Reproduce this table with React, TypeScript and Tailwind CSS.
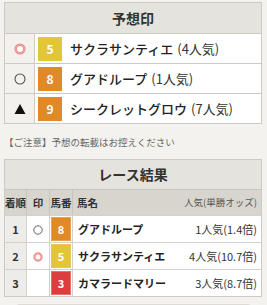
const font = { fontFamily: '"Noto Sans CJK JP", "Liberation Sans", sans-serif' };

type Mark = "double" | "circle" | "triangle" | null;

function MarkIcon({ mark, size = 12 }: { mark: Mark; size?: number }) {
  if (mark === "double") {
    return (
      <svg width={size} height={size} viewBox="0 0 12 12">
        <circle cx="6" cy="6" r="4.3" fill="#fff" stroke="#ec8c8c" strokeWidth="2.6" />
        <circle cx="6" cy="6" r="4.3" fill="none" stroke="#f2b3b3" strokeWidth="0.6" />
      </svg>
    );
  }
  if (mark === "circle") {
    return (
      <svg width={size} height={size} viewBox="0 0 12 12">
        <circle cx="6" cy="6" r="5" fill="none" stroke="#555" strokeWidth="1.1" />
      </svg>
    );
  }
  if (mark === "triangle") {
    return (
      <svg width={size} height={size} viewBox="0 0 12 12">
        <polygon points="6,1 11.5,11 0.5,11" fill="#111" />
      </svg>
    );
  }
  return null;
}

const picks = [
  { mark: "double" as Mark, num: 5, color: "bg-[#e3c637]", name: "サクラサンティエ", pop: "(4人気)" },
  { mark: "circle" as Mark, num: 8, color: "bg-[#e08a27]", name: "グアドループ", pop: "(1人気)" },
  { mark: "triangle" as Mark, num: 9, color: "bg-[#e08a27]", name: "シークレットグロウ", pop: "(7人気)" },
];

const results = [
  { rank: 1, mark: "circle" as Mark, num: 8, color: "bg-[#e08a27]", name: "グアドループ", odds: "1人気(1.4倍)" },
  { rank: 2, mark: "double" as Mark, num: 5, color: "bg-[#e3c637]", name: "サクラサンティエ", odds: "4人気(10.7倍)" },
  { rank: 3, mark: null, num: 3, color: "bg-[#de3d3d]", name: "カマラードマリー", odds: "3人気(8.7倍)" },
];

export default function App() {
  return (
    <div className="w-[267px] h-[305px] overflow-hidden bg-[#f4f2ef] pt-[2px] text-[#333]" style={font}>
      {/* 予想印 */}
      <div className="mx-[4px] w-[258px] border border-[#cdcac4] bg-white">
        <div className="h-[30px] bg-[#e5e3de] flex items-center justify-center text-[14px] font-bold text-[#333]">
          予想印
        </div>
        {picks.map((p) => (
          <div key={p.num} className="flex h-[30px] border-t border-[#cdcac4]">
            <div className="w-[30px] shrink-0 bg-[#f3f1ee] border-r border-[#cdcac4] flex items-center justify-center">
              <MarkIcon mark={p.mark} />
            </div>
            <div className="flex items-center pl-[3px]">
              <div className={`${p.color} w-[24px] h-[24px] flex items-center justify-center text-white text-[12px] font-bold`}>
                {p.num}
              </div>
              <span className="ml-[8px] text-[13px] font-medium text-[#222]">{p.name}</span>
              <span className="ml-[4px] text-[13px] text-[#333]">{p.pop}</span>
            </div>
          </div>
        ))}
      </div>

      <p className="mx-[4px] mt-[11px] text-[9.5px] leading-[14px] text-[#666]">【ご注意】予想の転載はお控えください</p>

      {/* レース結果 */}
      <div className="mx-[4px] mt-[10px] w-[258px] border border-[#cdcac4] bg-white">
        <div className="h-[29px] bg-[#e5e3de] flex items-center justify-center text-[14px] font-bold text-[#333]">
          レース結果
        </div>
        <div className="flex h-[26px] border-t border-[#c7c4bd] bg-[#d8d5cf] text-[10.5px] font-bold text-[#333]">
          <div className="w-[22px] flex items-center justify-center border-r border-[#c7c4bd]">着順</div>
          <div className="w-[23px] flex items-center justify-center border-r border-[#c7c4bd]">印</div>
          <div className="w-[23px] flex items-center justify-center border-r border-[#c7c4bd]">馬番</div>
          <div className="flex-1 flex items-center pl-[4px]">馬名</div>
          <div className="flex items-center pr-[4px] text-[9.5px] font-normal text-[#555]">人気(単勝オッズ)</div>
        </div>
        {results.map((r) => (
          <div key={r.rank} className="flex h-[27px] border-t border-[#d4d1cb] text-[11px]">
            <div className="w-[22px] flex items-center justify-center bg-[#eeece8] border-r border-[#d4d1cb] font-bold">
              {r.rank}
            </div>
            <div className="w-[23px] flex items-center justify-center border-r border-[#d4d1cb] pt-[2px]">
              <MarkIcon mark={r.mark} size={10} />
            </div>
            <div className="w-[23px] flex items-center justify-center border-r border-[#d4d1cb]">
              <div className={`${r.color} w-[20px] h-[24px] flex items-center justify-center text-white text-[11px] font-bold border border-[#f0c0a0]/40`}>
                {r.num}
              </div>
            </div>
            <div className="flex-1 flex items-center pl-[5px] font-bold text-[#222]">{r.name}</div>
            <div className="flex items-center pr-[4px] text-[#333]">{r.odds}</div>
          </div>
        ))}
      </div>

      <div className="mx-[15px] mt-[7px] h-[20px] rounded-t-[4px] border border-[#dedbd5] bg-white" />
    </div>
  );
}
